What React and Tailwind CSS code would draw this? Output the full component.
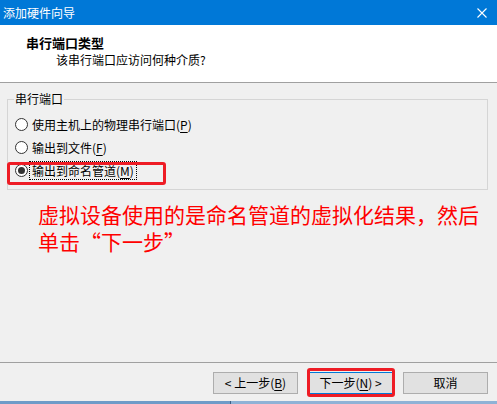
import React from "react";

const font = "font-['Microsoft_YaHei','Noto_Sans_CJK_SC',sans-serif]";

function Radio({ checked }) {
  return (
    <span className="relative flex h-[13px] w-[13px] shrink-0 items-center justify-center rounded-full border border-[#333] bg-white">
      {checked && <span className="h-[7px] w-[7px] rounded-full bg-[#333]" />}
    </span>
  );
}

function Option({ checked, focused, children }) {
  return (
    <div className="relative flex h-[23px] items-center pl-[1px]">
      <Radio checked={checked} />
      <span
        className={
          focused
            ? "ml-[1px] border border-dotted border-black px-[2px] leading-[17px]"
            : "ml-[4px] leading-[17px]"
        }
      >
        {children}
      </span>
      {focused && (
        <span className="pointer-events-none absolute -left-[7px] top-[3px] h-[23px] w-[159px] rounded-[3px] border-[3px] border-[#ee1c25]" />
      )}
    </div>
  );
}

function Button({ children, primary, marked }) {
  return (
    <div className="relative">
      <button
        className={
          "flex h-[22px] w-[85px] items-center justify-center border bg-[#e1e1e1] text-[12px] leading-[14px] text-black " +
          (primary ? "border-[#0078d7]" : "border-[#adadad]")
        }
      >
        {children}
      </button>
      {marked && (
        <span className="pointer-events-none absolute -bottom-[3px] -left-[1px] -right-[2px] -top-[4px] rounded-[3px] border-[3px] border-[#ee1c25]" />
      )}
    </div>
  );
}

export default function App() {
  return (
    <div className={`${font} flex h-[404px] w-[497px] flex-col overflow-hidden bg-[#f0f0f0] text-[12px] text-black`}>
      {/* title bar */}
      <div className="flex h-[25px] shrink-0 items-center justify-between bg-[#0078d7] pl-[3px] pr-[10px] text-white">
        <span className="text-[12px] leading-[14px]">添加硬件向导</span>
        <svg width="10" height="10" viewBox="0 0 10 10">
          <path d="M0.5 0.5 L9.5 9.5 M9.5 0.5 L0.5 9.5" stroke="white" strokeWidth="1.1" />
        </svg>
      </div>

      {/* header */}
      <div className="h-[58px] shrink-0 border-b border-[#a0a0a0] bg-white pl-[26px] pt-[11px]">
        <div className="text-[13px] font-bold leading-[13px]">串行端口类型</div>
        <div className="ml-[30px] mt-[4px] text-[12px] leading-[13px]">该串行端口应访问何种介质?</div>
      </div>

      {/* group box */}
      <fieldset className="ml-[7px] mr-[9px] mt-[9px] shrink-0 border border-[#d5d5d5] pb-[7px] pl-[6px] pt-[7px]">
        <legend className="px-[1px] text-[12px] leading-[14px]">串行端口</legend>
        <Option>
          使用主机上的物理串行端口(<u className="underline-offset-2">P</u>)
        </Option>
        <Option>
          输出到文件(<u className="underline-offset-2">F</u>)
        </Option>
        <Option checked focused>
          输出到命名管道(<u className="underline-offset-2">M</u>)
        </Option>
      </fieldset>

      {/* note */}
      <div className="mt-[11px] shrink-0 pl-[38px] text-[21px] leading-[27px] text-[#ff0000]">
        <div>虚拟设备使用的是命名管道的虚拟化结果，然后</div>
        <div>单击“下一步”</div>
      </div>

      <div className="flex-1" />

      {/* buttons */}
      <div className="shrink-0 border-t border-[#a0a0a0] pb-[7px] pt-[9px]">
        <div className="flex justify-end gap-[10px] pr-[9px]">
          <Button>
            &lt; 上一步(<u className="underline-offset-2">B</u>)
          </Button>
          <Button primary marked>
            下一步(<u className="underline-offset-2">N</u>) &gt;
          </Button>
          <Button>取消</Button>
        </div>
      </div>

      <div className="flex h-[3px] shrink-0">
        <div className="w-[230px] bg-[#6f9bc8]" />
        <div className="w-[1px] bg-[#3d5f85]" />
        <div className="flex-1 bg-[#8fb2d6]" />
      </div>
    </div>
  );
}
